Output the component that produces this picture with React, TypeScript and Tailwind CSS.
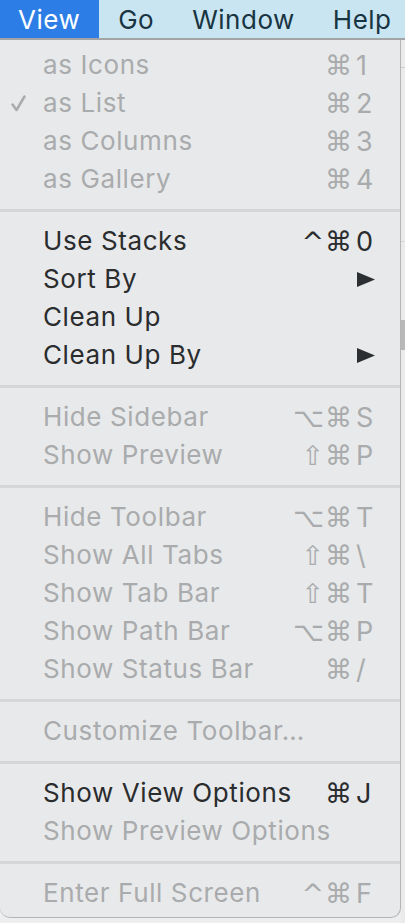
import type { ReactNode } from "react";

type Item = {
    label: string;
    keys?: [string, string];
    enabled?: boolean;
    checked?: boolean;
    submenu?: boolean;
};

const GROUPS: Item[][] = [
    [
        { label: "as Icons", keys: ["⌘", "1"] },
        { label: "as List", keys: ["⌘", "2"], checked: true },
        { label: "as Columns", keys: ["⌘", "3"] },
        { label: "as Gallery", keys: ["⌘", "4"] },
    ],
    [
        { label: "Use Stacks", keys: ["^⌘", "0"], enabled: true },
        { label: "Sort By", submenu: true, enabled: true },
        { label: "Clean Up", enabled: true },
        { label: "Clean Up By", submenu: true, enabled: true },
    ],
    [
        { label: "Hide Sidebar", keys: ["⌥⌘", "S"] },
        { label: "Show Preview", keys: ["⇧⌘", "P"] },
    ],
    [
        { label: "Hide Toolbar", keys: ["⌥⌘", "T"] },
        { label: "Show All Tabs", keys: ["⇧⌘", "\\"] },
        { label: "Show Tab Bar", keys: ["⇧⌘", "T"] },
        { label: "Show Path Bar", keys: ["⌥⌘", "P"] },
        { label: "Show Status Bar", keys: ["⌘", "/"] },
    ],
    [{ label: "Customize Toolbar…" }],
    [
        { label: "Show View Options", keys: ["⌘", "J"], enabled: true },
        { label: "Show Preview Options" },
    ],
    [{ label: "Enter Full Screen", keys: ["^⌘", "F"] }],
];

const FONT = "font-['Inter','Liberation_Sans',sans-serif]";

function Check() {
    return (
        <svg className="absolute left-[11px] top-[11px]" width="15" height="17" viewBox="0 0 15 17">
            <path d="M1.5 9.5 L5.5 15 L13.5 1.5" fill="none" stroke="currentColor" strokeWidth="2.5" strokeLinecap="round" strokeLinejoin="round" />
        </svg>
    );
}

function Arrow() {
    return (
        <svg width="18" height="15" viewBox="0 0 18 15" className="mr-[3px]">
            <path d="M0 0 L18 7.5 L0 15 Z" fill="#2c2f31" />
        </svg>
    );
}

function Row({ item }: { item: Item }) {
    const color = item.enabled ? "text-[#2a2c2e]" : "text-[#a9abad]";
    let right: ReactNode = null;
    if (item.submenu) right = <Arrow />;
    else if (item.keys)
        right = (
            <span className="flex items-center">
                <span className="text-right font-['DejaVu_Sans',sans-serif] text-[27px] leading-none tracking-[1px]">
                    {item.keys[0]}
                </span>
                <span className="ml-[3px] w-[22px] text-left text-[27px] leading-none">{item.keys[1]}</span>
            </span>
        );
    return (
        <div className={`relative flex h-[38px] items-center justify-between pl-[43px] pr-[22px] ${color}`}>
            {item.checked && <Check />}
            <span className="text-[26px] leading-none tracking-[0.6px]">{item.label}</span>
            {right}
        </div>
    );
}

export default function App() {
    return (
        <div className={`flex h-[923px] w-[405px] flex-col overflow-hidden bg-[#eeeeee] ${FONT}`}>
            <div className="flex h-[38px] flex-none items-center bg-[#c9e5f1] text-[26px] tracking-[0.5px] text-[#183441]">
                <div className="flex h-full items-center bg-[#2c7ee6] pl-[18px] pr-[19px] text-white">View</div>
                <div className="px-[19px]">Go</div>
                <div className="px-[19px]">Window</div>
                <div className="px-[19px]">Help</div>
            </div>
            <div className="h-[2px] flex-none bg-[#a2a4a6]" />
            <div className="flex flex-1 items-start">
                <div className="w-[401px] flex-none rounded-b-[10px] border-r border-b border-[#b3b5b7] bg-[#e8e9ea] pt-[6px] pb-[5px]">
                    {GROUPS.map((g, gi) => (
                        <div key={gi}>
                            {gi > 0 && (
                                <div className="flex h-[24px] items-center">
                                    <div className="h-[3px] w-full bg-[#d4d6d8]" />
                                </div>
                            )}
                            {g.map((it) => (
                                <Row key={it.label} item={it} />
                            ))}
                        </div>
                    ))}
                </div>
                <div className="flex h-full flex-1 flex-col bg-[#ebebeb]">
                    <div className="h-[27px]" />
                    <div className="h-px bg-[#cfcfcf]" />
                    <div className="h-[173px]" />
                    <div className="h-px bg-[#d6d6d6]" />
                    <div className="h-[78px]" />
                    <div className="h-[30px] bg-[#b8b8b8]" />
                </div>
            </div>
        </div>
    );
}
